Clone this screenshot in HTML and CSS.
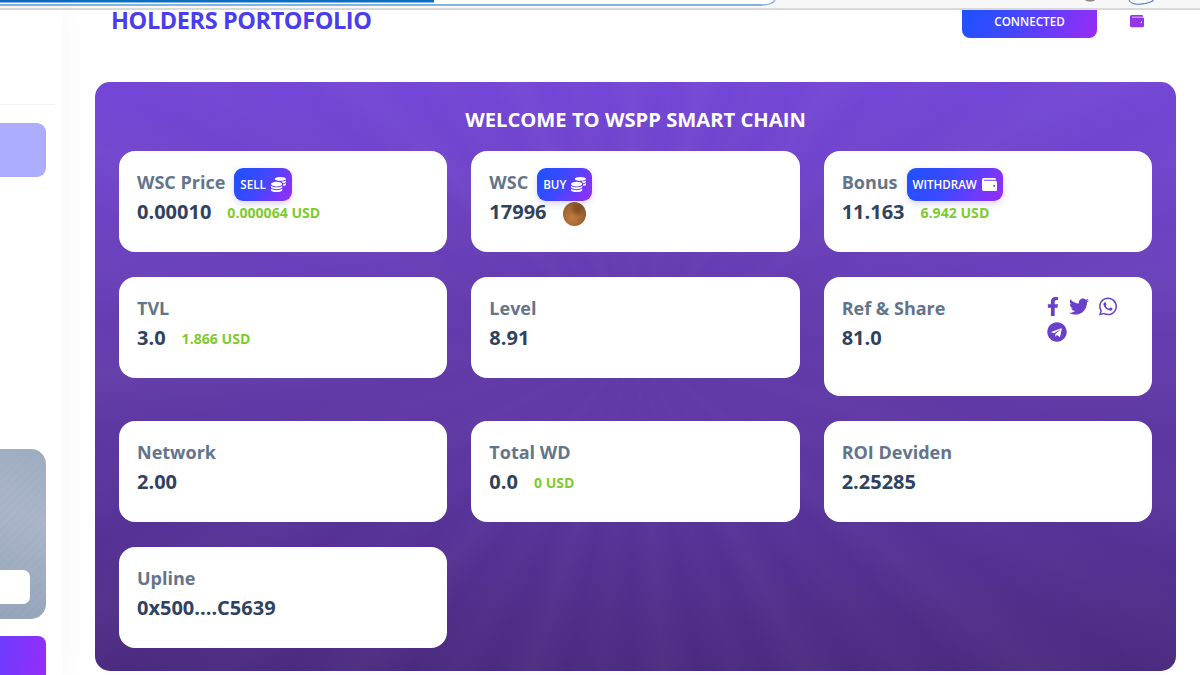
FILE: index.html
```html
<!DOCTYPE html>
<html lang="en">
<head>
<meta charset="utf-8">
<title>Holders Portofolio</title>
<link rel="stylesheet" href="styles.css">
</head>
<body>
<svg class="chrome" width="1200" height="10" viewBox="0 0 1200 10" aria-hidden="true">
  <rect width="1200" height="10" fill="#f7f7f7"/>
  <path d="M0 0H776C774 5 770 6.500 762 6.500H0Z" fill="#fff"/>
  <rect width="434" height="2.500" fill="#0b6cc2"/>
  <rect y="4" width="762" height="2" fill="#86b2df"/>
  <path d="M762 5C769 5 773 4 775 0" fill="none" stroke="#86b2df" stroke-width="1.500"/>
  <rect y="8" width="1200" height="2" fill="#d9d9d9"/>
  <path d="M1085 0H1095C1094 2 1087 2 1085 0Z" fill="#8f8a84"/>
  <path d="M1129 0C1130 3 1135 5 1141 4C1146 4 1150 2 1153 1V0" fill="none" stroke="#3a6fb5" stroke-width="1"/>
</svg>
<div class="page">
  <aside class="sidebar">
    <div class="side-rule"></div>
    <div class="side-active"></div>
    <div class="side-promo"><div class="side-promo-btn"></div></div>
    <div class="side-cta"></div>
  </aside>
  <main class="main">
    <header class="topbar">
      <h1 class="title">HOLDERS PORTOFOLIO</h1>
      <div class="top-actions">
        <button class="connected">CONNECTED</button>
        <svg class="top-wallet" viewBox="0 0 512 512"><path d="M461.2 128H80c-8.840 0-16-7.160-16-16s7.160-16 16-16h384c8.840 0 16-7.160 16-16 0-26.510-21.490-48-48-48H64C28.650 32 0 60.650 0 96v320c0 35.350 28.650 64 64 64h397.200c28.020 0 50.800-21.530 50.800-48V176c0-26.470-22.780-48-50.800-48zM416 336c-17.670 0-32-14.330-32-32s14.330-32 32-32 32 14.330 32 32-14.330 32-32 32z"/></svg>
      </div>
    </header>
    <section class="panel">
      <h2 class="panel-title">WELCOME TO WSPP SMART CHAIN</h2>
      <div class="grid">
        <div class="card">
          <div class="label-row"><span class="label">WSC Price</span>
            <span class="pill">SELL <svg class="pill-icon" viewBox="0 0 512 512"><path d="M0 405.300V448c0 35.300 86 64 192 64s192-28.700 192-64v-42.700C342.700 434.400 267.200 448 192 448S41.300 434.400 0 405.300zM320 128c106 0 192-28.700 192-64S426 0 320 0 128 28.700 128 64s86 64 192 64zM0 300.400V352c0 35.300 86 64 192 64s192-28.700 192-64v-51.600c-41.300 34-116.900 51.600-192 51.600S41.300 334.400 0 300.400zm416 11c57.300-11.100 96-31.700 96-55.400v-42.700c-23.200 16.400-57.300 27.600-96 34.500v63.600zM192 160C86 160 0 195.800 0 240s86 80 192 80 192-35.800 192-80-86-80-192-80zm219.300 56.300c60-10.800 100.700-32 100.700-56.300v-42.700c-35.500 25.100-96.500 38.600-160.700 41.800 29.500 14.300 51.200 33.500 60 57.200z"/></svg></span>
          </div>
          <div class="value-row"><span class="value">0.00010</span><span class="usd">0.000064 USD</span></div>
        </div>
        <div class="card">
          <div class="label-row"><span class="label">WSC</span>
            <span class="pill">BUY <svg class="pill-icon" viewBox="0 0 512 512"><path d="M0 405.300V448c0 35.300 86 64 192 64s192-28.700 192-64v-42.700C342.700 434.400 267.200 448 192 448S41.300 434.400 0 405.300zM320 128c106 0 192-28.700 192-64S426 0 320 0 128 28.700 128 64s86 64 192 64zM0 300.400V352c0 35.300 86 64 192 64s192-28.700 192-64v-51.600c-41.300 34-116.900 51.600-192 51.600S41.300 334.400 0 300.400zm416 11c57.300-11.100 96-31.700 96-55.400v-42.700c-23.200 16.400-57.300 27.600-96 34.500v63.600zM192 160C86 160 0 195.800 0 240s86 80 192 80 192-35.800 192-80-86-80-192-80zm219.300 56.300c60-10.800 100.700-32 100.700-56.300v-42.700c-35.500 25.100-96.500 38.600-160.700 41.800 29.500 14.300 51.200 33.500 60 57.200z"/></svg></span>
          </div>
          <div class="value-row"><span class="value">17996</span><span class="coin"></span></div>
        </div>
        <div class="card">
          <div class="label-row"><span class="label">Bonus</span>
            <span class="pill">WITHDRAW <svg class="pill-icon" viewBox="0 0 512 512"><path d="M461.200 128H80c-8.840 0-16-7.160-16-16s7.160-16 16-16h384c8.840 0 16-7.160 16-16 0-26.510-21.490-48-48-48H64C28.650 32 0 60.650 0 96v320c0 35.350 28.650 64 64 64h397.200c28.020 0 50.800-21.530 50.800-48V176c0-26.470-22.780-48-50.800-48zM416 336c-17.670 0-32-14.330-32-32s14.330-32 32-32 32 14.330 32 32-14.330 32-32 32z"/></svg></span>
          </div>
          <div class="value-row"><span class="value">11.163</span><span class="usd">6.942 USD</span></div>
        </div>
        <div class="card">
          <div class="label-row"><span class="label">TVL</span></div>
          <div class="value-row"><span class="value">3.0</span><span class="usd">1.866 USD</span></div>
        </div>
        <div class="card">
          <div class="label-row"><span class="label">Level</span></div>
          <div class="value-row"><span class="value">8.91</span></div>
        </div>
        <div class="card card-share">
          <div class="share-text">
            <div class="label-row"><span class="label">Ref &amp; Share</span></div>
            <div class="value-row"><span class="value">81.0</span></div>
          </div>
          <div class="socials">
            <svg class="soc soc-f" viewBox="0 0 320 512"><path d="M279.140 288l14.220-92.660h-88.910v-60.130c0-25.350 12.420-50.060 52.240-50.060h40.420V6.260S260.430 0 225.360 0c-73.220 0-121.080 44.380-121.080 124.720v70.620H22.890V288h81.390v224h100.170V288z"/></svg>
            <svg class="soc soc-t" viewBox="0 0 512 512"><path d="M459.370 151.716c.325 4.548.325 9.097.325 13.645 0 138.720-105.583 298.558-298.558 298.558-59.452 0-114.680-17.219-161.137-47.106 8.447.974 16.568 1.299 25.340 1.299 49.055 0 94.213-16.568 130.274-44.832-46.132-.975-84.792-31.188-98.112-72.772 6.498.974 12.995 1.624 19.818 1.624 9.421 0 18.843-1.300 27.614-3.573-48.081-9.747-84.143-51.980-84.143-102.985v-1.299c13.969 7.797 30.214 12.670 47.431 13.319-28.264-18.843-46.781-51.005-46.781-87.391 0-19.492 5.197-37.360 14.294-52.954 51.655 63.675 129.300 105.258 216.365 109.807-1.624-7.797-2.599-15.918-2.599-24.040 0-57.828 46.782-104.934 104.934-104.934 30.213 0 57.502 12.670 76.670 33.137 23.715-4.548 46.456-13.320 66.599-25.340-7.798 24.366-24.366 44.833-46.132 57.827 21.117-2.273 41.584-8.122 60.426-16.243-14.292 20.791-32.161 39.308-52.628 54.253z"/></svg>
            <svg class="soc soc-w" viewBox="0 0 448 512"><path d="M380.900 97.100C339 55.100 283.200 32 223.900 32c-122.400 0-222 99.600-222 222 0 39.100 10.200 77.300 29.600 111L0 480l117.700-30.900c32.400 17.700 68.900 27 106.100 27h.1c122.300 0 224.100-99.600 224.100-222 0-59.300-25.200-115-67.100-157zm-157 341.600c-33.200 0-65.700-8.900-94-25.700l-6.700-4-69.800 18.300L72 359.200l-4.400-7c-18.500-29.400-28.200-63.300-28.200-98.200 0-101.700 82.800-184.500 184.600-184.500 49.300 0 95.600 19.200 130.400 54.100 34.800 34.900 56.200 81.200 56.100 130.500 0 101.800-84.900 184.600-186.600 184.600zm101.200-138.200c-5.500-2.800-32.800-16.200-37.900-18-5.100-1.900-8.800-2.800-12.500 2.800-3.700 5.600-14.300 18-17.600 21.800-3.200 3.700-6.500 4.200-12 1.400-32.600-16.300-54-29.100-75.500-66-5.700-9.800 5.700-9.100 16.300-30.300 1.800-3.700.9-6.900-.5-9.700-1.400-2.800-12.500-30.100-17.100-41.200-4.500-10.800-9.100-9.300-12.500-9.500-3.200-.2-6.900-.2-10.600-.2-3.700 0-9.700 1.400-14.800 6.900-5.100 5.600-19.400 19-19.400 46.300 0 27.300 19.900 53.700 22.600 57.400 2.800 3.700 39.100 59.700 94.800 83.800 35.200 15.200 49 16.500 66.600 13.900 10.700-1.600 32.800-13.400 37.400-26.400 4.600-13 4.600-24.100 3.200-26.400-1.300-2.500-5-3.900-10.500-6.600z"/></svg>
            <svg class="soc soc-g" viewBox="0 0 496 512"><path d="M248 8C111 8 0 119 0 256s111 248 248 248 248-111 248-248S385 8 248 8zm121.800 169.900l-40.700 191.800c-3 13.600-11.100 16.900-22.400 10.500l-62-45.700-29.900 28.800c-3.300 3.300-6.100 6.100-12.500 6.100l4.400-63.100 114.900-103.800c5-4.400-1.100-6.900-7.700-2.500l-142 89.400-61.200-19.100c-13.300-4.200-13.600-13.300 2.800-19.700l239.100-92.200c11.100-4 20.800 2.700 17.200 19.500z"/></svg>
          </div>
        </div>
        <div class="card">
          <div class="label-row"><span class="label">Network</span></div>
          <div class="value-row"><span class="value">2.00</span></div>
        </div>
        <div class="card">
          <div class="label-row"><span class="label">Total WD</span></div>
          <div class="value-row"><span class="value">0.0</span><span class="usd">0 USD</span></div>
        </div>
        <div class="card">
          <div class="label-row"><span class="label">ROI Deviden</span></div>
          <div class="value-row"><span class="value">2.25285</span></div>
        </div>
        <div class="card">
          <div class="label-row"><span class="label">Upline</span></div>
          <div class="value-row"><span class="value">0x500....C5639</span></div>
        </div>
      </div>
    </section>
  </main>
</div>
</body>
</html>
```
FILE: styles.css
```css
* { box-sizing: border-box; }
html, body { margin: 0; height: 675px; overflow: hidden; background: #fff; }
body { font-family: "Open Sans", "Liberation Sans", sans-serif; }

.chrome { display: block; }

.page { display: flex; height: 665px; background: #fff; }

.sidebar {
  width: 62px;
  flex: none;
  padding-right: 16px;
  background: #fff;
  box-shadow: 2px 0 24px rgba(90, 70, 140, 0.05);
  overflow: hidden;
}
.side-rule { height: 1px; margin: 94px -9px 0 0; background: #f1f1f4; }
.side-active { height: 54px; margin-top: 18px; border-radius: 0 9px 9px 0; background: #adadff; }
.side-promo {
  height: 170px;
  margin-top: 272px;
  padding: 121px 16px 0 0;
  border-radius: 0 15px 15px 0;
  background:
    repeating-linear-gradient(135deg, rgba(255,255,255,0.025) 0 2px, rgba(255,255,255,0) 2px 6px),
    linear-gradient(200deg, #9dabc0 0%, #a9b4c8 40%, #94a3b8 100%);
}
.side-promo-btn { height: 34px; border-radius: 0 7px 7px 0; background: #fff; }
.side-cta { height: 50px; margin-top: 17px; border-radius: 0 8px 8px 0; background: linear-gradient(100deg, #6c3cff, #982cf6); }

.main { flex: 1; min-width: 0; padding: 0 24px 0 33px; position: relative; }

.topbar { display: flex; justify-content: space-between; align-items: flex-start; height: 72px; padding: 0 32px 0 16px; }
.title { margin: 0; font-size: 23.500px; line-height: 20px; letter-spacing: -0.400px; font-weight: 700; color: #4a3df0; }
.top-actions { display: flex; align-items: flex-start; gap: 33px; }
.connected {
  width: 135px;
  height: 28px;
  padding: 0 0 6px;
  border: 0;
  border-radius: 0 0 8px 8px;
  background: linear-gradient(115deg, #1b52ff 0%, #3f48ff 35%, #9a2cf5 100%);
  color: #fff;
  font: 600 11.700px "Open Sans", sans-serif;
}
.top-wallet { width: 14px; height: 16px; margin-top: 3px; fill: #9333ea; }

.panel {
  height: 589px;
  padding: 23px 24px 23px;
  border-radius: 15px;
  background:
    radial-gradient(ellipse 38% 32% at 50% 45%, rgba(97,58,168,0.9) 0%, rgba(97,58,168,0) 100%),
    repeating-conic-gradient(from 8deg at 50% 45%, rgba(255,255,255,0) 0deg, rgba(255,255,255,0.028) 6deg, rgba(255,255,255,0) 12deg, rgba(255,255,255,0.016) 17deg, rgba(255,255,255,0) 23deg),
    linear-gradient(180deg, #7346d6 0%, #6f44c8 18%, #613aa8 50%, #57339a 72%, #4b2b7f 100%);
}
.panel-title { margin: 0 0 18px; height: 28px; text-align: center; font-size: 20.200px; line-height: 28px; font-weight: 700; color: #fff; }

.grid { display: grid; grid-template-columns: repeat(3, 1fr); gap: 25px 24px; align-items: start; }

.card { height: 101px; padding: 18px 18px 0; border-radius: 16px; background: #fff; }
.card-share { display: flex; height: 119px; }
.share-text { width: 205px; flex: none; }

.label-row { display: flex; align-items: center; gap: 9px; height: 27px; }
.label { font-size: 18px; line-height: 27px; font-weight: 700; color: #64748b; }
.value-row { display: flex; align-items: center; height: 30px; margin-top: 1px; }
.value { font-size: 20px; line-height: 30px; font-weight: 700; color: #2f4260; }
.usd { margin-left: 16px; font-size: 14.100px; font-weight: 700; color: #7dcb2e; }

.pill {
  display: inline-flex;
  align-items: center;
  gap: 5px;
  height: 33px;
  margin: 4px 0 0;
  padding: 0 6px;
  border-radius: 9px;
  background: linear-gradient(120deg, #1b52ff 0%, #3f48ff 45%, #9a2cf5 100%);
  box-shadow: 0 3px 7px rgba(70, 60, 200, 0.2);
  color: #fff;
  font-size: 11.600px;
  font-weight: 600;
  white-space: nowrap;
}
.pill-icon { width: 15px; height: 15px; fill: #fff; }

.coin {
  width: 23px;
  height: 24px;
  margin: 3px 0 0 16px;
  border-radius: 50%;
  background:
    radial-gradient(circle at 62% 30%, rgba(70,40,20,0.45) 0%, rgba(70,40,20,0) 35%),
    radial-gradient(circle at 40% 65%, #c07d42 0%, #a3642f 50%, #74492a 100%);
}

.socials { display: flex; flex-wrap: wrap; align-items: center; align-content: flex-start; gap: 5px 10px; width: 72px; margin-top: 1px; }
.soc { fill: #6a3fc9; }
.soc-f { width: 12px; height: 21px; }
.soc-t { width: 20px; height: 21px; }
.soc-w { width: 18px; height: 21px; }
.soc-g { width: 20px; height: 20px; }
```
